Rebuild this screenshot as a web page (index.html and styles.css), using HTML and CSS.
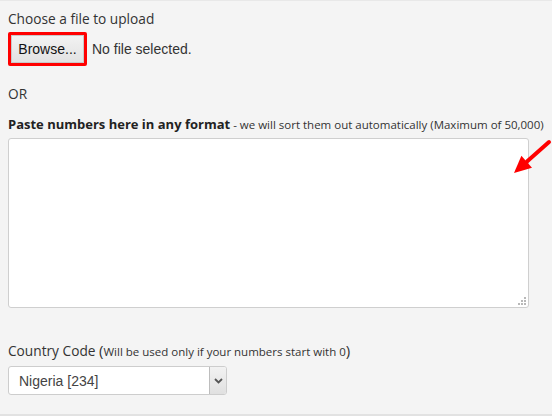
FILE: index.html
```html
<!DOCTYPE html>
<html>
<head>
<meta charset="utf-8">
<link rel="stylesheet" href="styles.css">
</head>
<body>
<div class="page">
  <div class="label">Choose a file to upload</div>
  <div class="file-row">
    <span class="highlight"><span class="browse">Browse...</span></span>
    <span class="nofile">No file selected.</span>
  </div>
  <div class="or">OR</div>
  <div class="paste-label"><b>Paste numbers here in any format</b><span class="small"> - we will sort them out automatically (Maximum of 50,000)</span></div>
  <div class="ta-wrap">
    <div class="textarea">
      <svg class="grip" width="8" height="8" viewBox="0 0 8 8"><g fill="#b8b8b8"><rect x="6" y="0" width="2" height="2"/><rect x="3" y="3" width="2" height="2"/><rect x="6" y="3" width="2" height="2"/><rect x="0" y="6" width="2" height="2"/><rect x="3" y="6" width="2" height="2"/><rect x="6" y="6" width="2" height="2"/></g></svg>
    </div>
    <svg class="arrow" width="46" height="42" viewBox="0 0 46 42"><line x1="41" y1="6" x2="19" y2="25.5" stroke="#f00" stroke-width="4" stroke-linecap="round"/><polygon points="6,37 13.4,19.7 24,31.7" fill="#f00"/></svg>
  </div>
  <div class="cc-label">Country Code <span class="paren">(</span><span class="small">Will be used only if your numbers start with 0</span><span class="paren">)</span></div>
  <div class="select">
    <span class="sel-text">Nigeria [234]</span>
    <span class="sel-btn"><svg width="9" height="6" viewBox="0 0 9 6"><path d="M1 1 L4.5 4.5 L8 1" fill="none" stroke="#555" stroke-width="1.8"/></svg></span>
  </div>
</div>
</body>
</html>
```
FILE: styles.css
```css
html, body { margin: 0; padding: 0; }
body {
  background: #f4f4f4;
  width: 552px;
  height: 416px;
  overflow: hidden;
  font-family: "Open Sans", "DejaVu Sans", sans-serif;
  color: #333;
}
.page {
  border-top: 1px solid #e8e8e8;
  border-bottom: 2px solid #e2e2e2;
  height: 416px;
  box-sizing: border-box;
  padding: 9px 8px 0 8px;
}
.label { font-size: 13.7px; line-height: 18px; }
.file-row { display: flex; align-items: center; margin-top: 4px; height: 34px; }
.highlight {
  display: inline-flex;
  border: 3px solid #f00;
  border-radius: 2px;
}
.browse {
  font-family: "Liberation Sans", Arial, sans-serif;
  font-size: 14px;
  color: #111;
  width: 73px;
  height: 28px;
  box-sizing: border-box;
  display: flex; align-items: center; justify-content: center;
  background: linear-gradient(#f2f2f2, #e2e2e2);
  border: 1px solid #c8c8c8;
}
.nofile { font-family: "Liberation Sans", Arial, sans-serif; font-size: 14px; color: #333; margin-left: 5px; }
.or { font-size: 13.7px; line-height: 18px; margin-top: 19px; }
.paste-label { margin-top: 12px; font-size: 13px; line-height: 18px; white-space: nowrap; }
.paste-label b { font-weight: 700; color: #222; }
.small { font-size: 11.5px; }
.ta-wrap { position: relative; margin-top: 4px; }
.textarea {
  width: 521px; height: 170px;
  box-sizing: border-box;
  background: #fff;
  border: 1px solid #cfcfcf;
  border-radius: 3px;
  position: relative;
}
.grip { position: absolute; right: 2px; bottom: 2px; }
.arrow { position: absolute; left: 500px; top: -2px; }
.cc-label { margin-top: 33px; font-size: 13.7px; line-height: 18px; white-space: nowrap; }
.paren { font-size: 15px; }
.select {
  margin-top: 5px;
  width: 219px; height: 29px;
  box-sizing: border-box;
  background: #fff;
  border: 1px solid #cdcdcd;
  border-radius: 3px;
  display: flex; align-items: stretch;
}
.sel-text { flex: 1; font-family: "Liberation Sans", Arial, sans-serif; font-size: 14px; color: #444; padding-left: 10px; display: flex; align-items: center; }
.sel-btn {
  width: 16px;
  background: linear-gradient(#f2f2f2, #e0e0e0);
  border-left: 1px solid #bdbdbd;
  display: flex; align-items: center; justify-content: center;
  border-radius: 0 2px 2px 0;
}
```
